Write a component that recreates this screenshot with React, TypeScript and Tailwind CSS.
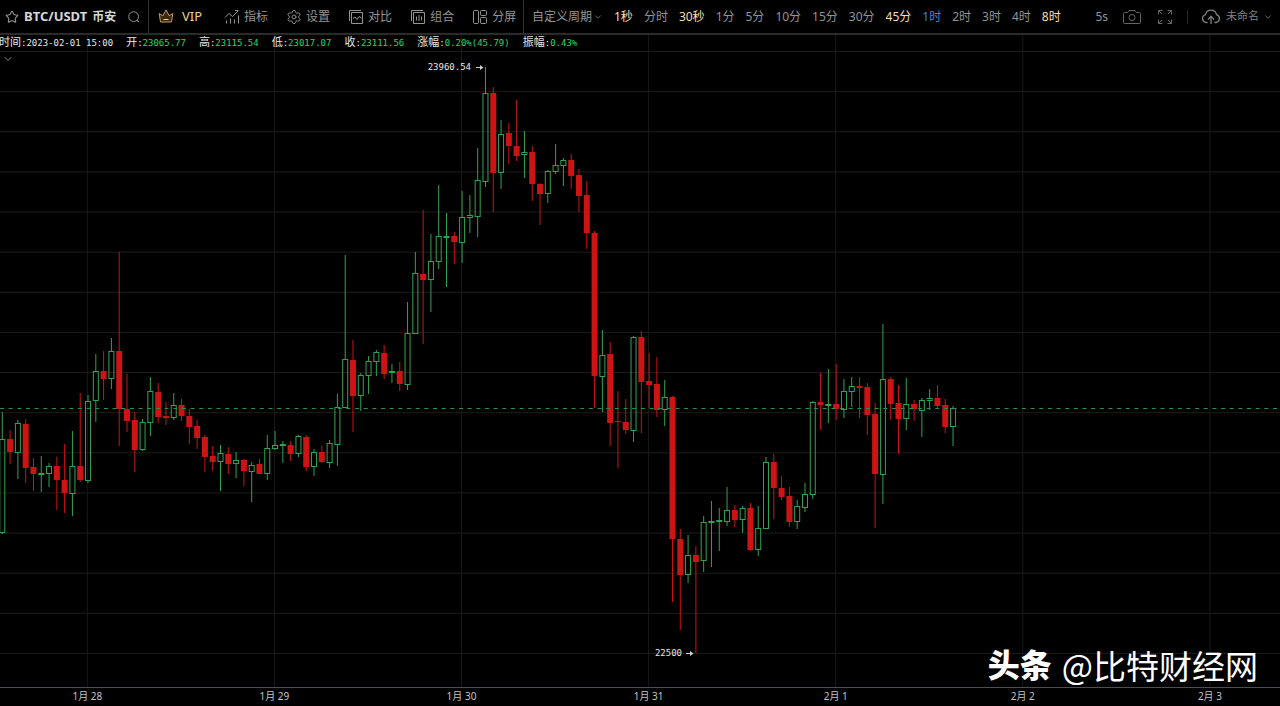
import type { ReactNode } from "react";
import { ChevronDown, Settings, Star } from "lucide-react";

type Candle = ["up" | "down", number, number, number, number];

// [direction, high, body top, body bottom, low]
const candles: Candle[] = [
  ["up", 412, 439, 532, 534], ["down", 430, 439, 452, 464], ["up", 420, 423, 452, 479],
  ["down", 419, 424, 468, 483], ["down", 458, 467, 474, 491], ["up", 456, 473, 474, 492],
  ["up", 463, 466, 473, 487], ["down", 457, 466, 480, 510], ["down", 444, 480, 493, 513],
  ["up", 431, 466, 493, 516], ["down", 393, 466, 480, 482], ["up", 395, 401, 480, 483],
  ["up", 354, 371, 400, 422], ["down", 351, 371, 379, 400], ["up", 338, 351, 378, 389],
  ["down", 252, 351, 409, 446], ["down", 374, 409, 421, 432], ["down", 412, 420, 450, 472],
  ["up", 419, 422, 449, 451], ["up", 377, 391, 422, 436], ["down", 383, 392, 417, 423],
  ["down", 402, 416, 418, 425], ["up", 393, 405, 417, 420], ["down", 399, 405, 416, 421],
  ["down", 409, 416, 427, 444], ["down", 420, 426, 438, 449], ["down", 435, 437, 457, 472],
  ["down", 446, 456, 462, 471], ["up", 445, 453, 461, 491], ["down", 447, 454, 464, 474],
  ["up", 452, 460, 463, 478], ["down", 459, 460, 471, 486], ["up", 462, 465, 471, 502],
  ["down", 459, 464, 474, 474], ["up", 435, 448, 473, 480], ["up", 431, 445, 448, 450],
  ["up", 441, 444, 445, 463], ["down", 441, 445, 454, 461], ["up", 435, 436, 453, 457],
  ["down", 435, 437, 467, 471], ["up", 449, 452, 466, 476], ["down", 446, 452, 462, 463],
  ["up", 440, 443, 462, 468], ["up", 394, 407, 444, 466], ["up", 255, 359, 407, 408],
  ["down", 340, 360, 396, 432], ["up", 373, 375, 395, 411], ["up", 356, 361, 375, 394],
  ["up", 350, 352, 361, 376], ["down", 345, 353, 374, 379], ["up", 364, 371, 372, 383],
  ["down", 362, 371, 384, 391], ["up", 302, 333, 384, 390], ["up", 252, 273, 333, 334],
  ["down", 210, 274, 280, 344], ["up", 234, 261, 279, 312], ["up", 185, 236, 261, 269],
  ["up", 213, 236, 237, 287], ["down", 232, 236, 242, 264], ["up", 191, 217, 242, 263],
  ["up", 195, 215, 217, 233], ["up", 148, 180, 216, 237], ["up", 67, 93, 181, 187],
  ["down", 87, 93, 173, 212], ["up", 120, 134, 172, 189], ["down", 123, 133, 146, 164],
  ["down", 100, 146, 156, 161], ["up", 131, 152, 154, 178], ["down", 146, 152, 184, 201],
  ["down", 183, 184, 194, 225], ["up", 170, 171, 193, 203], ["up", 144, 165, 171, 174],
  ["up", 158, 160, 165, 186], ["down", 154, 160, 176, 189], ["down", 169, 175, 196, 212],
  ["down", 181, 195, 233, 249], ["down", 231, 233, 376, 408], ["up", 330, 355, 376, 412],
  ["down", 342, 354, 423, 446], ["down", 391, 421, 422, 468], ["down", 399, 422, 430, 434],
  ["up", 336, 337, 430, 442], ["down", 331, 337, 382, 433], ["down", 353, 381, 385, 408],
  ["down", 357, 384, 410, 417], ["up", 380, 397, 409, 426], ["down", 396, 397, 539, 602],
  ["down", 529, 539, 575, 630], ["up", 535, 555, 574, 583], ["down", 546, 555, 562, 653],
  ["up", 516, 522, 560, 572], ["up", 501, 521, 522, 567], ["up", 508, 520, 521, 551],
  ["up", 487, 510, 521, 526], ["down", 505, 510, 520, 527], ["up", 506, 508, 519, 533],
  ["down", 503, 508, 550, 551], ["up", 506, 528, 549, 556], ["up", 457, 462, 528, 529],
  ["down", 454, 462, 488, 519], ["down", 476, 488, 497, 500], ["down", 487, 496, 522, 527],
  ["up", 500, 506, 521, 529], ["up", 483, 494, 507, 512], ["up", 401, 402, 494, 499],
  ["down", 373, 402, 405, 430], ["up", 369, 404, 405, 423], ["down", 364, 404, 409, 420],
  ["up", 379, 391, 409, 418], ["up", 377, 386, 391, 407], ["down", 377, 386, 388, 418],
  ["down", 383, 387, 415, 435], ["down", 403, 414, 474, 528], ["up", 324, 379, 474, 504],
  ["down", 377, 379, 404, 420], ["down", 385, 403, 419, 454], ["up", 378, 404, 418, 430],
  ["down", 400, 404, 409, 421], ["up", 398, 400, 410, 437], ["up", 389, 398, 400, 410],
  ["down", 385, 398, 406, 409], ["down", 399, 405, 427, 433], ["up", 406, 408, 426, 446],
];

const days = ["1月 28", "1月 29", "1月 30", "1月 31", "2月 1", "2月 2", "2月 3"];
const gridRows = Array.from({ length: 16 }, (_, i) => 51.5 + i * 40.13);
const dayX = (i: number) => 87.3 + i * 187.1;
const candleX = (i: number) => 2.3 + i * 7.793;

const intervals = [
  { label: "1秒", vip: true },
  { label: "分时" },
  { label: "30秒", vip: true },
  { label: "1分" },
  { label: "5分" },
  { label: "10分" },
  { label: "15分" },
  { label: "30分" },
  { label: "45分", vip: true },
  { label: "1时", active: true },
  { label: "2时" },
  { label: "3时" },
  { label: "4时" },
  { label: "8时", vip: true },
];

const quotes = [
  { label: "开", value: "23065.77" },
  { label: "高", value: "23115.54" },
  { label: "低", value: "23017.07" },
  { label: "收", value: "23111.56" },
  { label: "涨幅", value: "0.20%(45.79)" },
  { label: "振幅", value: "0.43%" },
];

function Icon({ children, className }: { children: ReactNode; className: string }) {
  return (
    <svg viewBox="0 0 16 16" fill="none" stroke="currentColor" className={className} aria-hidden="true">
      {children}
    </svg>
  );
}

const tools = [
  {
    label: "指标",
    icon: (
      <Icon className="size-4">
        <path d="M1 8.500l4-4 3.500 3L14 2M11 1.500h3.500M2.500 11.500v3M6.500 9.500v5M10.500 10.500v4M14.500 6.500v8" />
      </Icon>
    ),
  },
  { label: "设置", icon: <Settings className="size-4" strokeWidth={1.4} aria-hidden="true" /> },
  {
    label: "对比",
    icon: (
      <Icon className="size-4">
        <path d="M1.500 12V1.500H13M3.500 3.500h11v11h-11zM5 9.500l2-1.500 2 2.500 2-3 2.500 1.500" />
      </Icon>
    ),
  },
  {
    label: "组合",
    icon: (
      <Icon className="size-4">
        <path d="M1.500 12V1.500H13M3.500 3.500h11v11h-11zM6.500 7.500v4M9 6v6M11.500 7.500v4" />
      </Icon>
    ),
  },
  {
    label: "分屏",
    icon: (
      <Icon className="size-4">
        <rect x="1.500" y="1.500" width="5" height="13" rx="1" />
        <rect x="8.500" y="1.500" width="6" height="5" rx="1" />
        <rect x="8.500" y="8.500" width="6" height="6" rx="1" />
      </Icon>
    ),
  },
];

function Toolbar() {
  return (
    <header className="flex h-[35px] shrink-0 items-stretch overflow-hidden border-b-2 border-[#2a2a2a] text-xs whitespace-nowrap text-[#949494]">
      <div className="flex w-[149px] shrink-0 items-center border-r border-[#333] pl-[5px]">
        <button aria-label="收藏">
          <Star className="size-3.5" strokeWidth={1.8} />
        </button>
        <h1 className="ml-[5px] text-[13px] font-bold text-[#d6d6d6]">BTC/USDT</h1>
        <span className="ml-[5px] font-bold text-[#d6d6d6]">币安</span>
        <button aria-label="搜索" className="ml-3">
          <Icon className="size-3">
            <circle cx="7.500" cy="7.500" r="6.500" strokeWidth="1.300" />
            <path d="M12 12.500l2.500 2" strokeWidth="1.600" />
          </Icon>
        </button>
      </div>
      <div className="flex w-[375px] shrink-0 items-center border-r border-[#333] pl-[9px]">
        <button className="flex items-center gap-2 text-[13px] text-[#f3cf8e]">
          <Icon className="size-4">
            <path
              d="M2.500 14L1.200 5.500l3.600 2.300L8 2l3.200 5.800 3.600-2.300L13.500 14z"
              fill="#3a2a12"
              stroke="#c29a63"
              strokeLinejoin="round"
            />
            <path d="M5.500 11.500h5" stroke="#f3cf8e" />
          </Icon>
          VIP
        </button>
        <div className="ml-[22px] flex gap-[18px]">
          {tools.map((tool) => (
            <button key={tool.label} className="flex items-center gap-1">
              {tool.icon}
              {tool.label}
            </button>
          ))}
        </div>
      </div>
      <div className="flex items-center gap-[11px] pl-[7px]">
        <div className="flex items-center">
          <select aria-label="周期" className="w-[62px] appearance-none pl-px">
            <option>自定义周期</option>
          </select>
          <ChevronDown className="size-2.5 text-[#777]" aria-hidden="true" />
        </div>
        {intervals.map(({ label, vip, active }) => (
          <button key={label} className={vip ? "text-[#f8dfad]" : active ? "text-[#3d7fe8]" : ""}>
            {label}
          </button>
        ))}
      </div>
      <div className="ml-auto flex items-center pr-[7px]">
        <button>5s</button>
        <button aria-label="截图" className="ml-3.5 text-[#666]">
          <svg viewBox="0 0 20 16" fill="none" stroke="currentColor" className="h-4 w-5">
            <path d="M2.500 3.500h3l1.500-2h6l1.500 2h3q1 0 1 1v9q0 1-1 1h-15q-1 0-1-1v-9q0-1 1-1z" />
            <circle cx="10" cy="8.500" r="3" />
          </svg>
        </button>
        <button aria-label="全屏" className="ml-[15px] text-[#666]">
          <Icon className="size-4">
            <path d="M1.500 5.500v-4h4M10.500 1.500h4v4M14.500 10.500v4h-4M5.500 14.500h-4v-4M1.500 1.500l3.500 3.500M14.500 1.500l-3.500 3.500M14.500 14.500l-3.500-3.500M1.500 14.500l3.500-3.500" />
          </Icon>
        </button>
        <span className="ml-3.5 h-3.5 w-px bg-[#262626]" />
        <div className="ml-[13px] flex items-center text-[11px] text-[#808080]">
          <svg viewBox="0 0 20 16" fill="none" stroke="currentColor" className="mr-[5px] h-4 w-5" strokeWidth="1.300" aria-hidden="true">
            <path d="M6.500 13.500H5a4 4 0 0 1-.5-7.800 5.600 5.600 0 0 1 11 0 4 4 0 0 1-.5 7.800h-1.500M10 15V7.500M6.800 10.500L10 7.300l3.200 3.200" />
          </svg>
          <select aria-label="布局" className="w-[37px] appearance-none">
            <option>未命名</option>
          </select>
          <ChevronDown className="size-2.5" aria-hidden="true" />
        </div>
      </div>
    </header>
  );
}

function CandleShape({ candle, x }: { candle: Candle; x: number }) {
  const [direction, high, top, bottom, low] = candle;
  if (direction === "down") {
    return (
      <g>
        <path d={`M${x} ${high}V${low}`} stroke="#cc1414" />
        <rect x={x - 3} y={top} width={6} height={bottom - top} fill="#cc1414" />
      </g>
    );
  }
  return (
    <g stroke="#30a353" fill="none">
      <path d={`M${x} ${high}V${top}M${x} ${bottom + 1}V${Math.max(low, bottom + 1)}`} />
      <rect x={x - 2.5} y={top + 0.5} width={5} height={bottom - top} />
    </g>
  );
}

function Chart() {
  return (
    <section className="relative flex min-h-[652px] flex-1 flex-col">
      <svg className="w-full flex-1" role="img" aria-label="BTC/USDT K线图">
        {days.map((day, i) => (
          <line key={day} x1={dayX(i)} x2={dayX(i)} y1="0" y2="100%" stroke="#191919" />
        ))}
        {/* rows are measured from the page top, the toolbar takes 35 */}
        <g transform="translate(0 -35)">
          {gridRows.map((y) => (
            <line key={y} x1="0" x2="100%" y1={y} y2={y} stroke="#1c1c1c" />
          ))}
          {candles.map((candle, i) => (
            <CandleShape key={i} candle={candle} x={candleX(i)} />
          ))}
          <line x1="0" x2="100%" y1="408.5" y2="408.5" stroke="#2b8f49" strokeDasharray="4 4.660" />
          <g className="font-['DejaVu_Sans_Mono',monospace] text-[9px]" fill="#e6e6e6" textAnchor="end">
            <text x="471" y="70">23960.54</text>
            <text x="682" y="656">22500</text>
          </g>
          <path d="M476 67.500h5M686 653.500h5" stroke="#d0d0d0" />
          <path d="M480 65l3.500 2.500-3.500 2.500zM690 651l3.500 2.500-3.500 2.500z" fill="#d0d0d0" />
        </g>
      </svg>
      <div className="absolute inset-x-0 top-0 -ml-px flex h-[17px] items-center gap-[13px] overflow-hidden font-['DejaVu_Sans_Mono','Noto_Sans_CJK_SC',monospace] text-[9px] whitespace-nowrap text-[#e6e6e6]">
        <span className="flex items-center">
          <span className="text-[11px]">时间</span>:2023-02-01 15:00
        </span>
        {quotes.map(({ label, value }) => (
          <span key={label} className="flex items-center">
            <span className="text-[11px]">{label}</span>:<span className="text-[#22d866]">{value}</span>
          </span>
        ))}
      </div>
      <button aria-label="展开" className="absolute top-[18px] left-[2px] text-[#888]">
        <ChevronDown className="size-3" />
      </button>
      <div className="absolute right-[22px] bottom-[3px] flex items-center gap-[10px] text-[32px] leading-[38px] text-white">
        <strong className="font-black">头条</strong>
        <span className="font-['Noto_Sans_CJK_SC',sans-serif] text-[33px]">@比特财经网</span>
      </div>
    </section>
  );
}

export default function App() {
  return (
    <main className="flex min-h-screen flex-col overflow-hidden bg-black font-['Noto_Sans','Noto_Sans_CJK_SC',sans-serif]">
      <Toolbar />
      <Chart />
      <svg className="h-[19px] w-full shrink-0 border-t border-[#4a4e55] text-[10px]" fill="#c4c4c4" textAnchor="middle">
        {days.map((day, i) => (
          <text key={day} x={dayX(i)} y="12">
            {day}
          </text>
        ))}
      </svg>
    </main>
  );
}
